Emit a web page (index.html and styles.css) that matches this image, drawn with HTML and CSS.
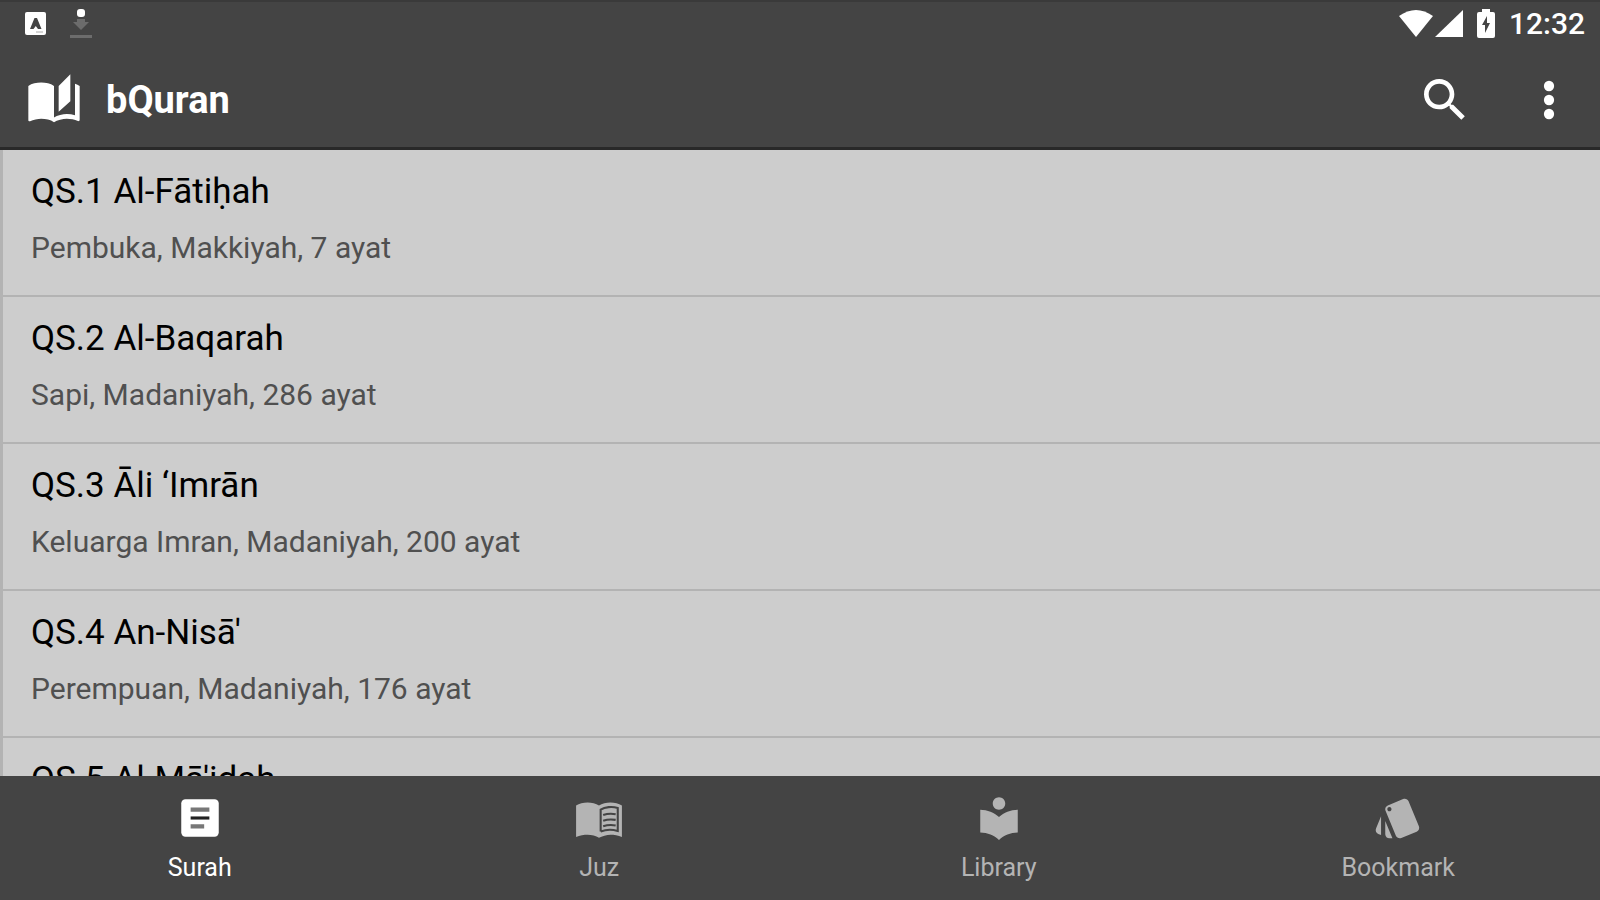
FILE: index.html
```html
<!DOCTYPE html>
<html lang="id">
<head>
<meta charset="utf-8">
<meta name="viewport" content="width=device-width, initial-scale=1">
<title>bQuran</title>
<link rel="stylesheet" href="styles.css">
</head>
<body>
<div class="app">
  <header class="header">
    <div class="status">
      <svg class="status-app" viewBox="0 0 22 24" aria-hidden="true"><rect width="21" height="23" rx="2" fill="#fff"/><path d="M5 17l4.500-11h2.500l4.500 11h-3.500l-2.200-3-2.300 3z" fill="#444"/><path d="M11 20h7" stroke="#aaa"/></svg>
      <svg class="status-download" viewBox="0 0 22 30" aria-hidden="true"><rect x="7" y="0" width="8" height="8" rx="3" fill="#fff"/><path d="M7 10h8v3h4l-8 8-8-8h4z" fill="#6c6c6c"/><path d="M0 27.500h22" stroke="#6c6c6c" stroke-width="3"/></svg>
      <div class="status-right">
        <svg class="wifi" viewBox="0 0 34 28" aria-hidden="true"><path d="M0 6Q17-6 34 6L17 27z" fill="#fff"/></svg>
        <svg class="signal" viewBox="0 0 28 28" aria-hidden="true"><path d="M28 0v27H0z" fill="#fff"/></svg>
        <svg class="battery" viewBox="0 0 18 30" aria-hidden="true"><path fill-rule="evenodd" d="M5 0h8v3h3q2 0 2 2v22q0 2-2 2H2q-2 0-2-2V5q0-2 2-2h3zM10 7l-5 9h3v8l5-10h-3z" fill="#fff"/></svg>
        <time class="clock">12:32</time>
      </div>
    </div>
    <div class="toolbar">
      <svg class="logo" viewBox="0 0 24 24" aria-hidden="true"><path fill="#fff" d="M19 1l-5 5v11l5-4.500V1zM1 6v14.650c0 .25.25.5.5.5.1 0 .15-.05.25-.05C3.100 20.450 5.050 20 6.500 20c1.950 0 4.050.4 5.500 1.500V6c-1.450-1.100-3.550-1.500-5.500-1.500S2.450 4.900 1 6zm22 13.500V6c-.6-.45-1.250-.75-2-1v13.500c-1.100-.35-2.300-.5-3.500-.5-1.700 0-4.150.65-5.500 1.500v2c1.350-.85 3.800-1.500 5.500-1.500 1.650 0 3.350.3 4.750 1.050.1.05.15.05.25.05.25 0 .5-.25.5-.5v-1.100z"/></svg>
      <h1 class="brand">bQuran</h1>
      <button class="tool" type="button" aria-label="Cari"><svg viewBox="0 0 24 24" aria-hidden="true"><path d="M15.500 14h-.79l-.28-.27C15.410 12.590 16 11.110 16 9.500 16 5.910 13.090 3 9.500 3S3 5.910 3 9.500 5.910 16 9.500 16c1.610 0 3.090-.59 4.230-1.570l.27.28v.79l5 4.990L20.490 19l-4.990-5zm-6 0C7.010 14 5 11.990 5 9.500S7.010 5 9.500 5 14 7.010 14 9.500 11.990 14 9.500 14z"/></svg></button>
      <button class="tool" type="button" aria-label="Menu"><svg viewBox="0 0 24 24" aria-hidden="true"><circle cx="12" cy="6" r="2.200"/><circle cx="12" cy="12" r="2.200"/><circle cx="12" cy="18" r="2.200"/></svg></button>
    </div>
  </header>

  <main class="list">
    <article class="row"><h2 class="title">QS.1 Al-Fātiḥah</h2><p class="detail">Pembuka, Makkiyah, 7 ayat</p></article>
    <article class="row"><h2 class="title">QS.2 Al-Baqarah</h2><p class="detail">Sapi, Madaniyah, 286 ayat</p></article>
    <article class="row"><h2 class="title">QS.3 Āli ‘Imrān</h2><p class="detail">Keluarga Imran, Madaniyah, 200 ayat</p></article>
    <article class="row"><h2 class="title">QS.4 An-Nisā'</h2><p class="detail">Perempuan, Madaniyah, 176 ayat</p></article>
    <article class="row"><h2 class="title">QS.5 Al-Mā'idah</h2></article>
  </main>

  <nav class="tabs">
    <button class="tab tab-active" type="button"><svg viewBox="0 0 24 24" aria-hidden="true"><rect x="3" y="3" width="18" height="18" rx="2"/><path d="M7.500 8h9M7.500 16h6.500" stroke="#777" stroke-width="2"/><path d="M7.500 12h9" stroke="#222" stroke-width="1.500"/></svg>Surah</button>
    <button class="tab" type="button"><svg viewBox="0 0 24 24" aria-hidden="true"><path d="M12 6c-1.450-1.100-3.550-1.500-5.500-1.500S2.450 4.900 1 6v15.100C2.700 20.300 5 20 6.500 20c1.950 0 4.050.4 5.500 1.500 1.350-.85 3.800-1.500 5.500-1.500 1.650 0 3.800.3 5.500 1.100V6c-1.500-1.100-3.550-1.500-5.500-1.500S13.450 4.900 12 6z"/><path d="M12.800 18.500V8c2-1.300 5.500-1.700 8.200-.8v11c-2.500-.7-5.700-.7-8.200.3M14 10.600c2-.7 3.800-.8 6-.4M14 13.300c2-.7 3.800-.8 6-.4M14 16c2-.7 3.800-.8 6-.4" fill="none" stroke="#444" stroke-width="1"/></svg>Juz</button>
    <button class="tab" type="button"><svg viewBox="0 0 24 24" aria-hidden="true"><path d="M12 11.550C9.640 9.350 6.480 8 3 8v11c3.480 0 6.640 1.350 9 3.550 2.360-2.190 5.520-3.550 9-3.550V8c-3.480 0-6.640 1.350-9 3.550zM12 8c1.660 0 3-1.340 3-3s-1.340-3-3-3-3 1.340-3 3 1.340 3 3 3z"/></svg>Library</button>
    <button class="tab" type="button"><svg viewBox="0 0 24 24" aria-hidden="true"><path d="M2.530 19.650l1.340.56v-9.030l-2.430 5.860c-.41 1.020.08 2.190 1.090 2.610zm19.500-3.700L17.070 3.980c-.31-.75-1.040-1.210-1.810-1.230-.26 0-.53.04-.79.15L7.100 5.950c-.75.31-1.210 1.030-1.230 1.800-.01.27.04.54.15.8l4.960 11.970c.31.76 1.050 1.220 1.830 1.230.26 0 .52-.05.77-.15l7.360-3.050c1.020-.42 1.510-1.590 1.090-2.600zM7.880 8.750c-.55 0-1-.45-1-1s.45-1 1-1 1 .45 1 1-.45 1-1 1zm-2 11c0 1.100.9 2 2 2h1.450l-3.450-8.340v6.340z"/></svg>Bookmark</button>
  </nav>
</div>
</body>
</html>
```
FILE: styles.css
```css
* {
  box-sizing: border-box;
}

body {
  margin: 0;
  font-family: Roboto, "Noto Sans", sans-serif;
}

.app {
  display: flex;
  flex-direction: column;
  height: 100vh;
  background: #cdcdcd;
}

.header {
  flex: none;
  color: #fff;
  background: #444;
  border-top: 2px solid #3a3a3a;
  border-bottom: 3px solid #292929;
}

.status {
  display: flex;
  align-items: center;
  height: 44px;
  padding: 0 15px 0 25px;
}

.status-app {
  width: 22px;
  height: 24px;
}

.status-download {
  width: 22px;
  height: 30px;
  margin-left: 23px;
}

.status-right {
  display: flex;
  align-items: center;
  margin-left: auto;
}

.wifi {
  width: 34px;
  height: 28px;
}

.signal {
  width: 28px;
  height: 28px;
  margin-left: 2px;
}

.battery {
  width: 18px;
  height: 30px;
  margin: 0 14px;
}

.clock {
  font-size: 30px;
  line-height: 44px;
  font-weight: 500;
}

.toolbar {
  display: flex;
  align-items: center;
  height: 101px;
  padding: 6px 23px 0 26px;
}

.logo {
  width: 56px;
  height: 56px;
}

.brand {
  margin: 0 auto 0 24px;
  font-size: 38px;
  line-height: 44px;
  font-weight: 700;
}

.tool {
  padding: 0;
  border: 0;
  background: none;
  margin-left: 48px;
  cursor: pointer;
}

.tool svg {
  display: block;
  width: 56px;
  height: 56px;
  fill: #fff;
}

.list {
  flex: 1;
  min-height: 0;
  overflow: hidden;
  border-left: 3px solid #b3b3b3;
}

.row {
  height: 147px;
  padding: 20px 28px 0;
  border-bottom: 2px solid #b3b3b3;
}

.title {
  margin: 0;
  font-size: 35px;
  line-height: 44px;
  font-weight: 400;
  color: #000;
}

.detail {
  margin: 14px 0 0;
  font-size: 30px;
  line-height: 40px;
  color: #505050;
}

.tabs {
  flex: none;
  display: grid;
  grid-template-columns: repeat(4, 1fr);
  height: 124px;
  padding-right: 2px;
  background: #444;
}

.tab {
  display: flex;
  flex-direction: column;
  align-items: center;
  gap: 9px;
  padding: 17px 0 0;
  border: 0;
  background: none;
  color: #b4b4b4;
  fill: #b4b4b4;
  font: 400 25px/32px Roboto, "Noto Sans", sans-serif;
  cursor: pointer;
}

.tab svg {
  width: 50px;
  height: 50px;
}

.tab-active {
  color: #fff;
  fill: #fff;
}
```
